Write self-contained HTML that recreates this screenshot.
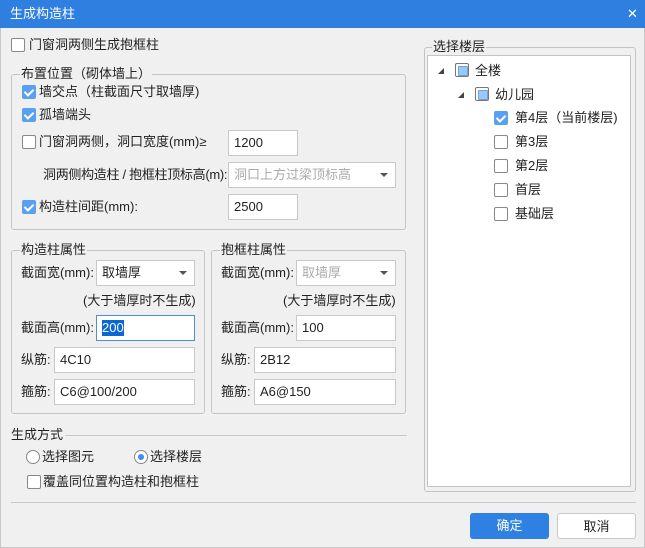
<!DOCTYPE html>
<html><head><meta charset="utf-8"><style>
*{box-sizing:border-box;margin:0;padding:0}
body{width:645px;height:548px;background:#f0f0f0;font-family:"Liberation Sans","Noto Sans CJK SC",sans-serif;font-size:13px;color:#222;position:relative;overflow:hidden;border:1px solid #c8c8c8}
.a{position:absolute}
.t{position:absolute;line-height:16px;white-space:nowrap}
.cb{position:absolute;width:14px;height:14px;border:1px solid #888;border-radius:2px;background:#fff}
.cb.on{background:#5aa0f0;border-color:#5aa0f0}
.cb.on::after{content:"";position:absolute;left:3px;top:1px;width:4px;height:7px;border:solid #fff;border-width:0 2px 2px 0;transform:rotate(45deg)}
.cb.part{border-color:#777}
.cb.part::after{content:"";position:absolute;left:2px;top:2px;width:8px;height:8px;background:#9cc8f8;border:1px solid #6aa4e8;border-radius:1px}
.grp{position:absolute;border:1px solid #c4c4c4;border-radius:3px}
.lbl{position:absolute;background:#f0f0f0;padding:0 1px;line-height:16px;white-space:nowrap}
.in{position:absolute;background:#fff;border:1px solid #c8c8c8;padding-left:5px;line-height:23px;white-space:nowrap}
.sel::after{content:"";position:absolute;right:7px;top:10px;border:4px solid transparent;border-top:4px solid #555;border-bottom:0}
.dis{color:#aaa}
.arr{position:absolute;width:0;height:0;border-left:6px solid transparent;border-bottom:6px solid #444}
.rad{position:absolute;width:14px;height:14px;border:1px solid #888;border-radius:50%;background:#fff}
.btn{position:absolute;width:79px;height:26px;border-radius:3px;text-align:center;line-height:26px}
</style></head><body>
<div class="a" style="left:-1px;top:-1px;width:645px;height:28px;background:#2e7fdf"></div>
<div class="t" style="left:9px;top:5px;color:#fff;font-size:13px">生成构造柱</div>
<div class="t" style="left:626px;top:5px;color:#fff;font-size:13px">✕</div>

<div class="cb" style="left:10px;top:37px"></div>
<div class="t" style="left:28px;top:36px">门窗洞两侧生成抱框柱</div>

<div class="grp" style="left:10px;top:73px;width:395px;height:156px"></div>
<div class="lbl" style="left:19px;top:65px">布置位置（砌体墙上）</div>
<div class="cb on" style="left:21px;top:84px"></div><div class="t" style="left:38px;top:83px">墙交点（柱截面尺寸取墙厚)</div>
<div class="cb on" style="left:21px;top:107px"></div><div class="t" style="left:38px;top:106px">孤墙端头</div>
<div class="cb" style="left:21px;top:134px"></div><div class="t" style="left:38px;top:133px">门窗洞两侧，洞口宽度(mm)≥</div>
<div class="in" style="left:227px;top:129px;width:70px;height:26px">1200</div>
<div class="t" style="left:42px;top:166px;letter-spacing:-0.3px">洞两侧构造柱 / 抱框柱顶标高(m):</div>
<div class="in sel dis" style="left:227px;top:161px;width:168px;height:26px">洞口上方过梁顶标高</div>
<div class="cb on" style="left:21px;top:199px"></div><div class="t" style="left:38px;top:198px">构造柱间距(mm):</div>
<div class="in" style="left:227px;top:193px;width:70px;height:26px">2500</div>

<div class="grp" style="left:10px;top:249px;width:194px;height:164px"></div>
<div class="lbl" style="left:19px;top:241px">构造柱属性</div>
<div class="t" style="left:20px;top:264px">截面宽(mm):</div>
<div class="in sel" style="left:95px;top:259px;width:99px;height:26px">取墙厚</div>
<div class="t" style="left:82px;top:292px">(大于墙厚时不生成)</div>
<div class="t" style="left:20px;top:319px">截面高(mm):</div>
<div class="in" style="left:95px;top:314px;width:99px;height:26px;border-color:#4a8fe0"><span style="background:#0a68d4;color:#fff;line-height:16px;display:inline-block">200</span></div>
<div class="t" style="left:20px;top:351px">纵筋:</div>
<div class="in" style="left:53px;top:346px;width:141px;height:26px">4C10</div>
<div class="t" style="left:20px;top:383px">箍筋:</div>
<div class="in" style="left:53px;top:378px;width:141px;height:26px">C6@100/200</div>

<div class="grp" style="left:210px;top:249px;width:195px;height:164px"></div>
<div class="lbl" style="left:219px;top:241px">抱框柱属性</div>
<div class="t" style="left:220px;top:264px">截面宽(mm):</div>
<div class="in sel dis" style="left:295px;top:259px;width:100px;height:26px">取墙厚</div>
<div class="t" style="left:282px;top:292px">(大于墙厚时不生成)</div>
<div class="t" style="left:220px;top:319px">截面高(mm):</div>
<div class="in" style="left:295px;top:314px;width:100px;height:26px">100</div>
<div class="t" style="left:220px;top:351px">纵筋:</div>
<div class="in" style="left:253px;top:346px;width:142px;height:26px">2B12</div>
<div class="t" style="left:220px;top:383px">箍筋:</div>
<div class="in" style="left:253px;top:378px;width:142px;height:26px">A6@150</div>

<div class="t" style="left:10px;top:426px">生成方式</div>
<div class="a" style="left:64px;top:434px;width:342px;height:1px;background:#c8c8c8"></div>
<div class="rad" style="left:25px;top:449px"></div><div class="t" style="left:41px;top:448px">选择图元</div>
<div class="rad" style="left:133px;top:449px"><div class="a" style="left:3px;top:3px;width:6px;height:6px;border-radius:50%;background:#3d8ef0"></div></div><div class="t" style="left:149px;top:448px">选择楼层</div>
<div class="cb" style="left:26px;top:474px"></div><div class="t" style="left:42px;top:473px">覆盖同位置构造柱和抱框柱</div>

<div class="grp" style="left:423px;top:46px;width:212px;height:445px"></div>
<div class="a" style="left:426px;top:54px;width:204px;height:432px;background:#fff;border:1px solid #c4c4c4"></div>
<div class="lbl" style="left:431px;top:38px">选择楼层</div>
<div class="arr" style="left:437px;top:67px"></div>
<div class="cb part" style="left:454px;top:62px"></div><div class="t" style="left:474px;top:62px">全楼</div>
<div class="arr" style="left:457px;top:91px"></div>
<div class="cb part" style="left:474px;top:86px"></div><div class="t" style="left:494px;top:86px">幼儿园</div>
<div class="cb on" style="left:493px;top:110px"></div><div class="t" style="left:514px;top:109px">第4层（当前楼层)</div>
<div class="cb" style="left:493px;top:134px"></div><div class="t" style="left:514px;top:133px">第3层</div>
<div class="cb" style="left:493px;top:158px"></div><div class="t" style="left:514px;top:157px">第2层</div>
<div class="cb" style="left:493px;top:182px"></div><div class="t" style="left:514px;top:181px">首层</div>
<div class="cb" style="left:493px;top:206px"></div><div class="t" style="left:514px;top:205px">基础层</div>

<div class="a" style="left:10px;top:501px;width:625px;height:1px;background:#c8c8c8"></div>
<div class="btn" style="left:469px;top:512px;background:#2e80e2;color:#fff">确定</div>
<div class="btn" style="left:556px;top:512px;background:#fff;border:1px solid #c8c8c8">取消</div>
</body></html>
